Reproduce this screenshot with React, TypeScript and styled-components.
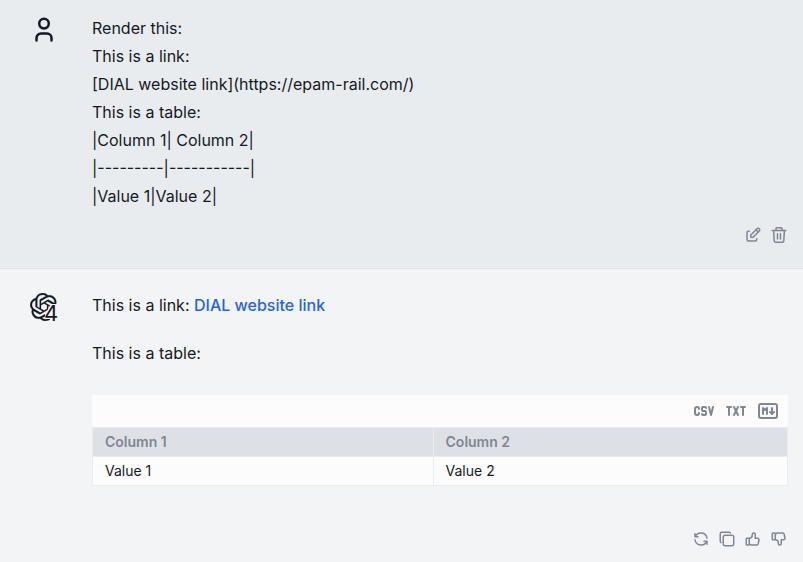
import React from "react";
import styled, { createGlobalStyle } from "styled-components";
import { SiOpenai } from "react-icons/si";
import {
  TbCopy,
  TbCsv,
  TbEdit,
  TbMarkdown,
  TbRefresh,
  TbThumbDown,
  TbThumbUp,
  TbTxt,
} from "react-icons/tb";

const GlobalStyle = createGlobalStyle`
  *, *::before, *::after { box-sizing: border-box; }
  html, body, #root { height: 100%; }
  body {
    margin: 0;
    background: #f3f4f6;
    color: #141a23;
    font: 400 16px/28px Inter, sans-serif;
  }
  p { margin: 0; }
`;

const Chat = styled.main`
  display: flex;
  flex-direction: column;
  min-height: 100%;
`;

const Message = styled.article<{ $own?: boolean }>`
  display: grid;
  grid-template-columns: 32px minmax(0, 1fr);
  column-gap: 32px;
  padding: ${(p) => (p.$own ? "14px 15px 24px 28px" : "22px 15px 10px 28px")};
  background: ${(p) => (p.$own ? "#e9ecef" : "#f3f4f6")};
  border-bottom: ${(p) => (p.$own ? "1px solid #dde1e6" : "none")};
`;

const Avatar = styled.div`
  display: flex;
  justify-content: center;
  align-items: center;
  height: 32px;
`;

const Content = styled.div`
  display: flex;
  flex-direction: column;
  min-width: 0;
`;

const PlainText = styled.div`
  white-space: pre-wrap;
`;

const Markdown = styled.div`
  display: flex;
  flex-direction: column;
  gap: 20px;
`;

const Link = styled.a`
  color: #2764d9;
  font-weight: 500;
  text-decoration: none;
`;

const Actions = styled.div<{ $gap: number }>`
  display: flex;
  justify-content: flex-end;
  gap: 8px;
  margin-top: ${(p) => p.$gap}px;
`;

const IconButton = styled.button<{ $size?: number }>`
  display: flex;
  padding: 0;
  border: 0;
  background: none;
  color: #7f8792;
  cursor: pointer;
  svg {
    width: ${(p) => p.$size ?? 18}px;
    height: ${(p) => p.$size ?? 18}px;
  }
`;

const TableCard = styled.section`
  margin-top: 28px;
  background: #fcfcfc;
`;

const TableTools = styled.div`
  display: flex;
  justify-content: flex-end;
  align-items: center;
  gap: 8px;
  height: 32px;
  padding-right: 8px;
`;

const Table = styled.table`
  width: 100%;
  border-collapse: collapse;
  font-size: 14px;
  line-height: 20px;
  text-align: left;
`;

const HeadCell = styled.th`
  padding: 4px 12px;
  border: 1px solid #e9ecef;
  background: #dde1e6;
  color: #7f8792;
  font-weight: 600;
  &:first-child { width: 49%; }
`;

const Cell = styled.td`
  padding: 4px 12px;
  border: 1px solid #e9ecef;
`;

const ModelMark = styled.svg`
  display: block;
  overflow: visible;
  .logo {
    stroke: #141a23;
    stroke-width: 0.2px;
  }
  text {
    font: 400 22px Inter, sans-serif;
    fill: #141a23;
  }
`;

const UserIcon = () => (
  <svg width="24" height="26" viewBox="0 0 24 26" fill="none" stroke="#141a23" strokeWidth="2.5" strokeLinecap="round" aria-label="User">
    <circle cx="12" cy="6.6" r="4.8" />
    <path d="M4.5 23.5v-2.5a4.5 4.5 0 0 1 4.5-4.5h6a4.5 4.5 0 0 1 4.5 4.5v2.5" />
  </svg>
);

const ModelIcon = () => (
  <ModelMark width="28" height="28" viewBox="0 0 28 28" aria-label="GPT-4">
    <SiOpenai className="logo" size={28} color="#141a23" />
    <path d="M21 11h9v18H20v-3h-5v-5z" fill="#f3f4f6" />
    <text x="14" y="28">4</text>
  </ModelMark>
);

const TrashIcon = () => (
  <svg viewBox="0 0 18 18" fill="none" stroke="currentColor" strokeWidth="1.5" strokeLinecap="round" strokeLinejoin="round">
    <path d="M2.2 4.5h13.6M6 4.5V2.6a.8.8 0 0 1 .8-.8h4.4a.8.8 0 0 1 .8.8v1.9M3.6 4.5l.6 10.2a1.5 1.5 0 0 0 1.5 1.5h6.6a1.5 1.5 0 0 0 1.5-1.5l.6-10.2M7.5 7.8v5.2M10.5 7.8v5.2" />
  </svg>
);

const source = `Render this:
This is a link:
[DIAL website link](https://epam-rail.com/)
This is a table:
|Column 1| Column 2|
|---------|-----------|
|Value 1|Value 2|`;

export default function App() {
  return (
    <>
      <GlobalStyle />
      <Chat>
        <Message $own>
          <Avatar><UserIcon /></Avatar>
          <Content>
            <PlainText>{source}</PlainText>
            <Actions $gap={16}>
              <IconButton aria-label="Edit"><TbEdit /></IconButton>
              <IconButton aria-label="Delete"><TrashIcon /></IconButton>
            </Actions>
          </Content>
        </Message>
        <Message>
          <Avatar><ModelIcon /></Avatar>
          <Content>
            <Markdown>
              <p>This is a link: <Link href="https://epam-rail.com/">DIAL website link</Link></p>
              <p>This is a table:</p>
            </Markdown>
            <TableCard>
              <TableTools>
                <IconButton $size={24} aria-label="Copy as CSV"><TbCsv /></IconButton>
                <IconButton $size={24} aria-label="Copy as TXT"><TbTxt /></IconButton>
                <IconButton $size={24} aria-label="Copy as Markdown"><TbMarkdown /></IconButton>
              </TableTools>
              <Table>
                <thead>
                  <tr><HeadCell>Column 1</HeadCell><HeadCell>Column 2</HeadCell></tr>
                </thead>
                <tbody>
                  <tr><Cell>Value 1</Cell><Cell>Value 2</Cell></tr>
                </tbody>
              </Table>
            </TableCard>
            <Actions $gap={44}>
              <IconButton aria-label="Regenerate"><TbRefresh /></IconButton>
              <IconButton aria-label="Copy"><TbCopy /></IconButton>
              <IconButton aria-label="Like"><TbThumbUp /></IconButton>
              <IconButton aria-label="Dislike"><TbThumbDown /></IconButton>
            </Actions>
          </Content>
        </Message>
      </Chat>
    </>
  );
}
